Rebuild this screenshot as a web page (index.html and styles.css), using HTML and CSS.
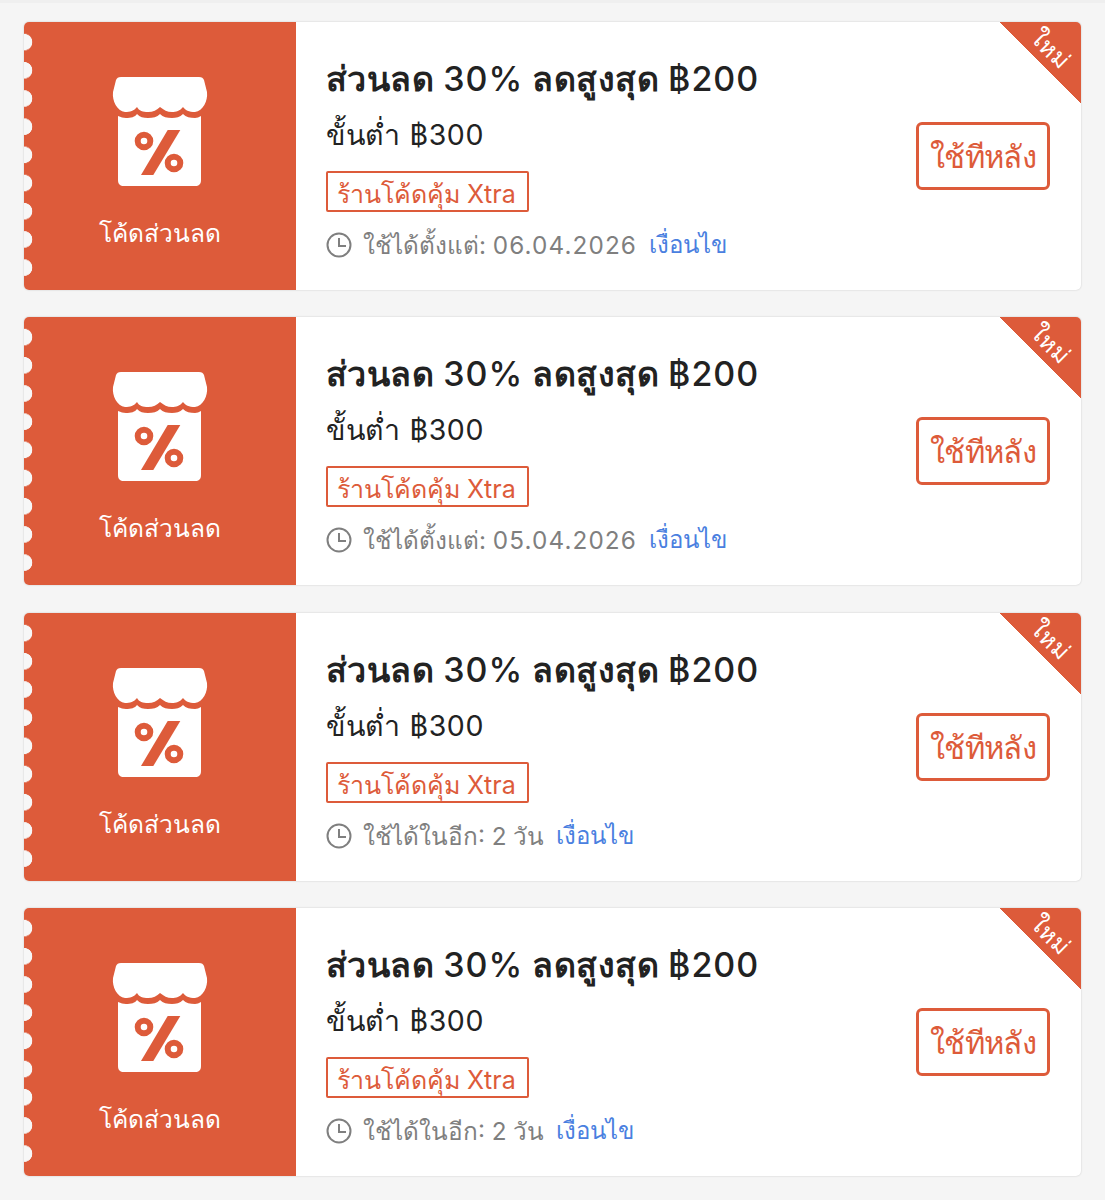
FILE: index.html
```html
<!DOCTYPE html>
<html lang="th">
<head>
    <meta charset="UTF-8">
    <title>โค้ดส่วนลด</title>
    <link rel="stylesheet" href="styles.css">
</head>
<body>
    <svg class="defs" width="0" height="0">
        <symbol id="shop" viewBox="0 0 96 110">
            <path fill="#fff" d="M9 0H87C90 0 91 1 92 3L95 15C96 24 91 34 83 35C77 35 73 33 71 30C68 34 64 35 60 35C55 35 52 33 48 30C45 33 41 35 36 35C31 35 27 34 25 30C22 34 18 35 13 35C5 34 0 24 1 15L4 3C5 1 6 0 9 0Z"/>
            <path fill="#fff" d="M6 39C9 40 11 41 14 41C19 41 23 40 25 37C28 40 31 41 36 41C41 41 45 40 48 37C51 40 55 41 60 41C64 41 68 40 71 37C74 40 78 41 83 41C85 41 87 40 89 39V103C89 107 87 109 83 109H12C8 109 6 107 6 103Z"/>
            <g fill="none" stroke="#dd5b3a" stroke-width="6">
                <circle cx="32" cy="64" r="6.3"/>
                <circle cx="62" cy="86" r="6.3"/>
            </g>
            <polygon fill="#dd5b3a" points="55.7,53 68.3,53 41.3,98 29,98"/>
        </symbol>
        <symbol id="clock" viewBox="0 0 26 26">
            <circle cx="13" cy="13" r="11.5" fill="none" stroke="#7f7f7f" stroke-width="2"/>
            <path d="M13 6V14H20" fill="none" stroke="#7f7f7f" stroke-width="2"/>
        </symbol>
    </svg>

    <div class="list">
        <div class="voucher">
            <div class="voucher-left">
                <svg class="shop-icon"><use href="#shop"/></svg>
                <div class="voucher-type">โค้ดส่วนลด</div>
            </div>
            <div class="voucher-info">
                <div class="title">ส่วนลด <span class="num">30%</span> ลดสูงสุด <span class="num">฿200</span></div>
                <div class="min-spend">ขั้นต่ำ ฿300</div>
                <div class="tag">ร้านโค้ดคุ้ม Xtra</div>
                <div class="meta">
                    <svg class="clock"><use href="#clock"/></svg>
                    <span>ใช้ได้ตั้งแต่: <span class="date">06.04.2026</span></span>
                    <a class="terms">เงื่อนไข</a>
                </div>
            </div>
            <button class="later">ใช้ทีหลัง</button>
            <div class="ribbon"><span>ใหม่</span></div>
        </div>

        <div class="voucher">
            <div class="voucher-left">
                <svg class="shop-icon"><use href="#shop"/></svg>
                <div class="voucher-type">โค้ดส่วนลด</div>
            </div>
            <div class="voucher-info">
                <div class="title">ส่วนลด <span class="num">30%</span> ลดสูงสุด <span class="num">฿200</span></div>
                <div class="min-spend">ขั้นต่ำ ฿300</div>
                <div class="tag">ร้านโค้ดคุ้ม Xtra</div>
                <div class="meta">
                    <svg class="clock"><use href="#clock"/></svg>
                    <span>ใช้ได้ตั้งแต่: <span class="date">05.04.2026</span></span>
                    <a class="terms">เงื่อนไข</a>
                </div>
            </div>
            <button class="later">ใช้ทีหลัง</button>
            <div class="ribbon"><span>ใหม่</span></div>
        </div>

        <div class="voucher">
            <div class="voucher-left">
                <svg class="shop-icon"><use href="#shop"/></svg>
                <div class="voucher-type">โค้ดส่วนลด</div>
            </div>
            <div class="voucher-info">
                <div class="title">ส่วนลด <span class="num">30%</span> ลดสูงสุด <span class="num">฿200</span></div>
                <div class="min-spend">ขั้นต่ำ ฿300</div>
                <div class="tag">ร้านโค้ดคุ้ม Xtra</div>
                <div class="meta">
                    <svg class="clock"><use href="#clock"/></svg>
                    <span>ใช้ได้ในอีก: 2 วัน</span>
                    <a class="terms">เงื่อนไข</a>
                </div>
            </div>
            <button class="later">ใช้ทีหลัง</button>
            <div class="ribbon"><span>ใหม่</span></div>
        </div>

        <div class="voucher">
            <div class="voucher-left">
                <svg class="shop-icon"><use href="#shop"/></svg>
                <div class="voucher-type">โค้ดส่วนลด</div>
            </div>
            <div class="voucher-info">
                <div class="title">ส่วนลด <span class="num">30%</span> ลดสูงสุด <span class="num">฿200</span></div>
                <div class="min-spend">ขั้นต่ำ ฿300</div>
                <div class="tag">ร้านโค้ดคุ้ม Xtra</div>
                <div class="meta">
                    <svg class="clock"><use href="#clock"/></svg>
                    <span>ใช้ได้ในอีก: 2 วัน</span>
                    <a class="terms">เงื่อนไข</a>
                </div>
            </div>
            <button class="later">ใช้ทีหลัง</button>
            <div class="ribbon"><span>ใหม่</span></div>
        </div>
    </div>
</body>
</html>
```

FILE: styles.css
```css
* {
    box-sizing: border-box;
}

html, body {
    height: 1200px;
    overflow: hidden;
}

body {
    margin: 0;
    background: #f5f5f5;
    font-family: Inter, "Noto Sans", "DejaVu Sans", sans-serif;
    color: #222;
}

.defs {
    display: block;
    height: 0;
}

.list {
    display: flex;
    flex-direction: column;
    gap: 27.4px;
    padding: 19px 24px 0;
    border-top: 3px solid #efefef;
}

.voucher {
    position: relative;
    display: flex;
    align-items: stretch;
    height: 268px;
    background: #fff;
    border-radius: 5px;
    box-shadow: 0 0 2px rgba(0,0,0,0.2);
    overflow: hidden;
}

.voucher-left {
    position: relative;
    flex: 0 0 272px;
    display: flex;
    flex-direction: column;
    align-items: center;
    background: #dd5b3a;
    color: #fff;
    padding: 55px 1px 0 0;
}

/* perforated edge */
.voucher-left::before {
    content: "";
    position: absolute;
    left: 0;
    top: 6px;
    width: 9px;
    height: 254px;
    background-image: radial-gradient(circle at 0 50%, #f7f7f7 8px, transparent 8.6px);
    background-size: 9px 28.2px;
}

.shop-icon {
    width: 96px;
    height: 110px;
}

.voucher-type {
    font-size: 24.5px;
    line-height: 32px;
    margin-top: 30px;
}

.voucher-info {
    flex: 1;
    display: flex;
    flex-direction: column;
    align-items: flex-start;
    padding: 35px 0 0 30px;
}

.title {
    font-size: 34px;
    font-weight: 600;
    letter-spacing: 0.45px;
    line-height: 44px;
}

.num {
    font-weight: 500;
    letter-spacing: 1px;
}

.min-spend {
    font-size: 28.5px;
    letter-spacing: 0.6px;
    line-height: 40px;
    margin-top: 14px;
}

.tag {
    height: 41px;
    margin-top: 16px;
    padding: 0 11px 0 9px;
    border: 2px solid #dd5b3a;
    border-radius: 2px;
    color: #dd5b3a;
    font-size: 25px;
    line-height: 43px;
}

.meta {
    display: flex;
    align-items: center;
    margin-top: 15px;
    color: #7f7f7f;
    font-size: 24.3px;
    line-height: 36px;
}

.date {
    letter-spacing: 1.1px;
}

.clock {
    width: 26px;
    height: 26px;
    margin-right: 11px;
}

.terms {
    margin-left: 12px;
    color: #4a7fe0;
    font-size: 24px;
    font-weight: 500;
}

.later {
    align-self: flex-start;
    width: 134px;
    height: 68px;
    margin: 100px 31px 0 0;
    padding: 2px 0 0;
    background: #fff;
    border: 3px solid #dd5b3a;
    border-radius: 6px;
    color: #dd5b3a;
    font-family: inherit;
    font-size: 31px;
    letter-spacing: -0.6px;
}

.ribbon {
    position: absolute;
    top: 0;
    right: 0;
    width: 82px;
    height: 82px;
    background: linear-gradient(to top right, transparent 50%, #dd5b3a 50.5%);
}

.ribbon span {
    position: absolute;
    top: 13px;
    right: 1px;
    width: 60px;
    text-align: center;
    color: #fff;
    font-size: 24px;
    font-weight: 500;
    line-height: 28px;
    transform: rotate(45deg);
}
```
